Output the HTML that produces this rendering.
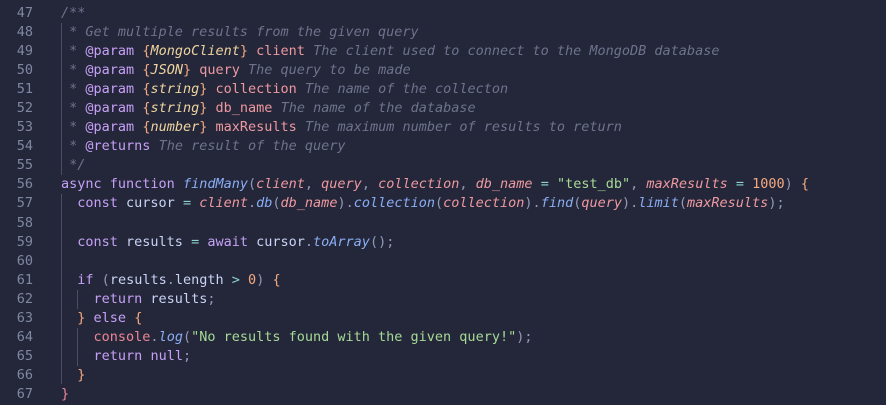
<!DOCTYPE html><html><head><style>
body{margin:0;background:#24273a;width:886px;height:405px;overflow:hidden}
pre{margin:0;position:absolute;top:4px;left:0;font-family:"DejaVu Sans Mono","Liberation Mono",monospace;font-size:13.5px;line-height:19.05px;color:#cad3f5}
.n{display:inline-block;width:33px;text-align:right;color:#8087a2;margin-right:28px}
.c{color:#6e738d;font-style:italic}.cs{color:#6e738d}
.k{color:#c6a0f6}.f{color:#8aadf4;font-style:italic}.p{color:#ee99a0;font-style:italic}.pm{color:#ee99a0}
.s{color:#a6da95}.o{color:#8bd5ca}.b{color:#f5a97f}.y{color:#eed49f;font-style:italic}.r{color:#ed8796}.d{color:#939ab7}
.g{position:absolute;width:1px;background:#494d64}
</style></head><body>
<div class="g" style="left:61px;top:23px;height:152px"></div>
<div class="g" style="left:61px;top:194px;height:190px"></div>
<div class="g" style="left:77px;top:290px;height:19px"></div>
<div class="g" style="left:77px;top:328px;height:38px"></div>
<pre><span class="n">47</span><span class="c">/**</span>
<span class="n">48</span><span class="c"> * Get multiple results from the given query</span>
<span class="n">49</span><span class="cs"> * </span><span class="k">@param</span> <span class="b">{</span><span class="y">MongoClient</span><span class="b">}</span> <span class="pm">client</span> <span class="c">The client used to connect to the MongoDB database</span>
<span class="n">50</span><span class="cs"> * </span><span class="k">@param</span> <span class="b">{</span><span class="y">JSON</span><span class="b">}</span> <span class="pm">query</span> <span class="c">The query to be made</span>
<span class="n">51</span><span class="cs"> * </span><span class="k">@param</span> <span class="b">{</span><span class="y">string</span><span class="b">}</span> <span class="pm">collection</span> <span class="c">The name of the collecton</span>
<span class="n">52</span><span class="cs"> * </span><span class="k">@param</span> <span class="b">{</span><span class="y">string</span><span class="b">}</span> <span class="pm">db_name</span> <span class="c">The name of the database</span>
<span class="n">53</span><span class="cs"> * </span><span class="k">@param</span> <span class="b">{</span><span class="y">number</span><span class="b">}</span> <span class="pm">maxResults</span> <span class="c">The maximum number of results to return</span>
<span class="n">54</span><span class="cs"> * </span><span class="k">@returns</span> <span class="c">The result of the query</span>
<span class="n">55</span><span class="c"> */</span>
<span class="n">56</span><span class="k">async function</span> <span class="f">findMany</span><span class="d">(</span><span class="p">client</span><span class="d">,</span> <span class="p">query</span><span class="d">,</span> <span class="p">collection</span><span class="d">,</span> <span class="p">db_name</span> <span class="o">=</span> <span class="s">"test_db"</span><span class="d">,</span> <span class="p">maxResults</span> <span class="o">=</span> <span class="b">1000</span><span class="d">)</span> <span class="b">{</span>
<span class="n">57</span>  <span class="k">const</span> cursor <span class="o">=</span> <span class="p">client</span><span class="d">.</span><span class="f">db</span><span class="d">(</span><span class="p">db_name</span><span class="d">).</span><span class="f">collection</span><span class="d">(</span><span class="p">collection</span><span class="d">).</span><span class="f">find</span><span class="d">(</span><span class="p">query</span><span class="d">).</span><span class="f">limit</span><span class="d">(</span><span class="p">maxResults</span><span class="d">);</span>
<span class="n">58</span>
<span class="n">59</span>  <span class="k">const</span> results <span class="o">=</span> <span class="k">await</span> cursor<span class="d">.</span><span class="f">toArray</span><span class="d">();</span>
<span class="n">60</span>
<span class="n">61</span>  <span class="k">if</span> <span class="d">(</span>results<span class="d">.</span>length <span class="o">&gt;</span> <span class="b">0</span><span class="d">)</span> <span class="b">{</span>
<span class="n">62</span>    <span class="k">return</span> results<span class="d">;</span>
<span class="n">63</span>  <span class="b">}</span> <span class="k">else</span> <span class="b">{</span>
<span class="n">64</span>    <span class="r">console</span><span class="d">.</span><span class="f">log</span><span class="d">(</span><span class="s">"No results found with the given query!"</span><span class="d">);</span>
<span class="n">65</span>    <span class="k">return</span> <span class="k">null</span><span class="d">;</span>
<span class="n">66</span>  <span class="b">}</span>
<span class="n">67</span><span class="r">}</span></pre>
</body></html>
